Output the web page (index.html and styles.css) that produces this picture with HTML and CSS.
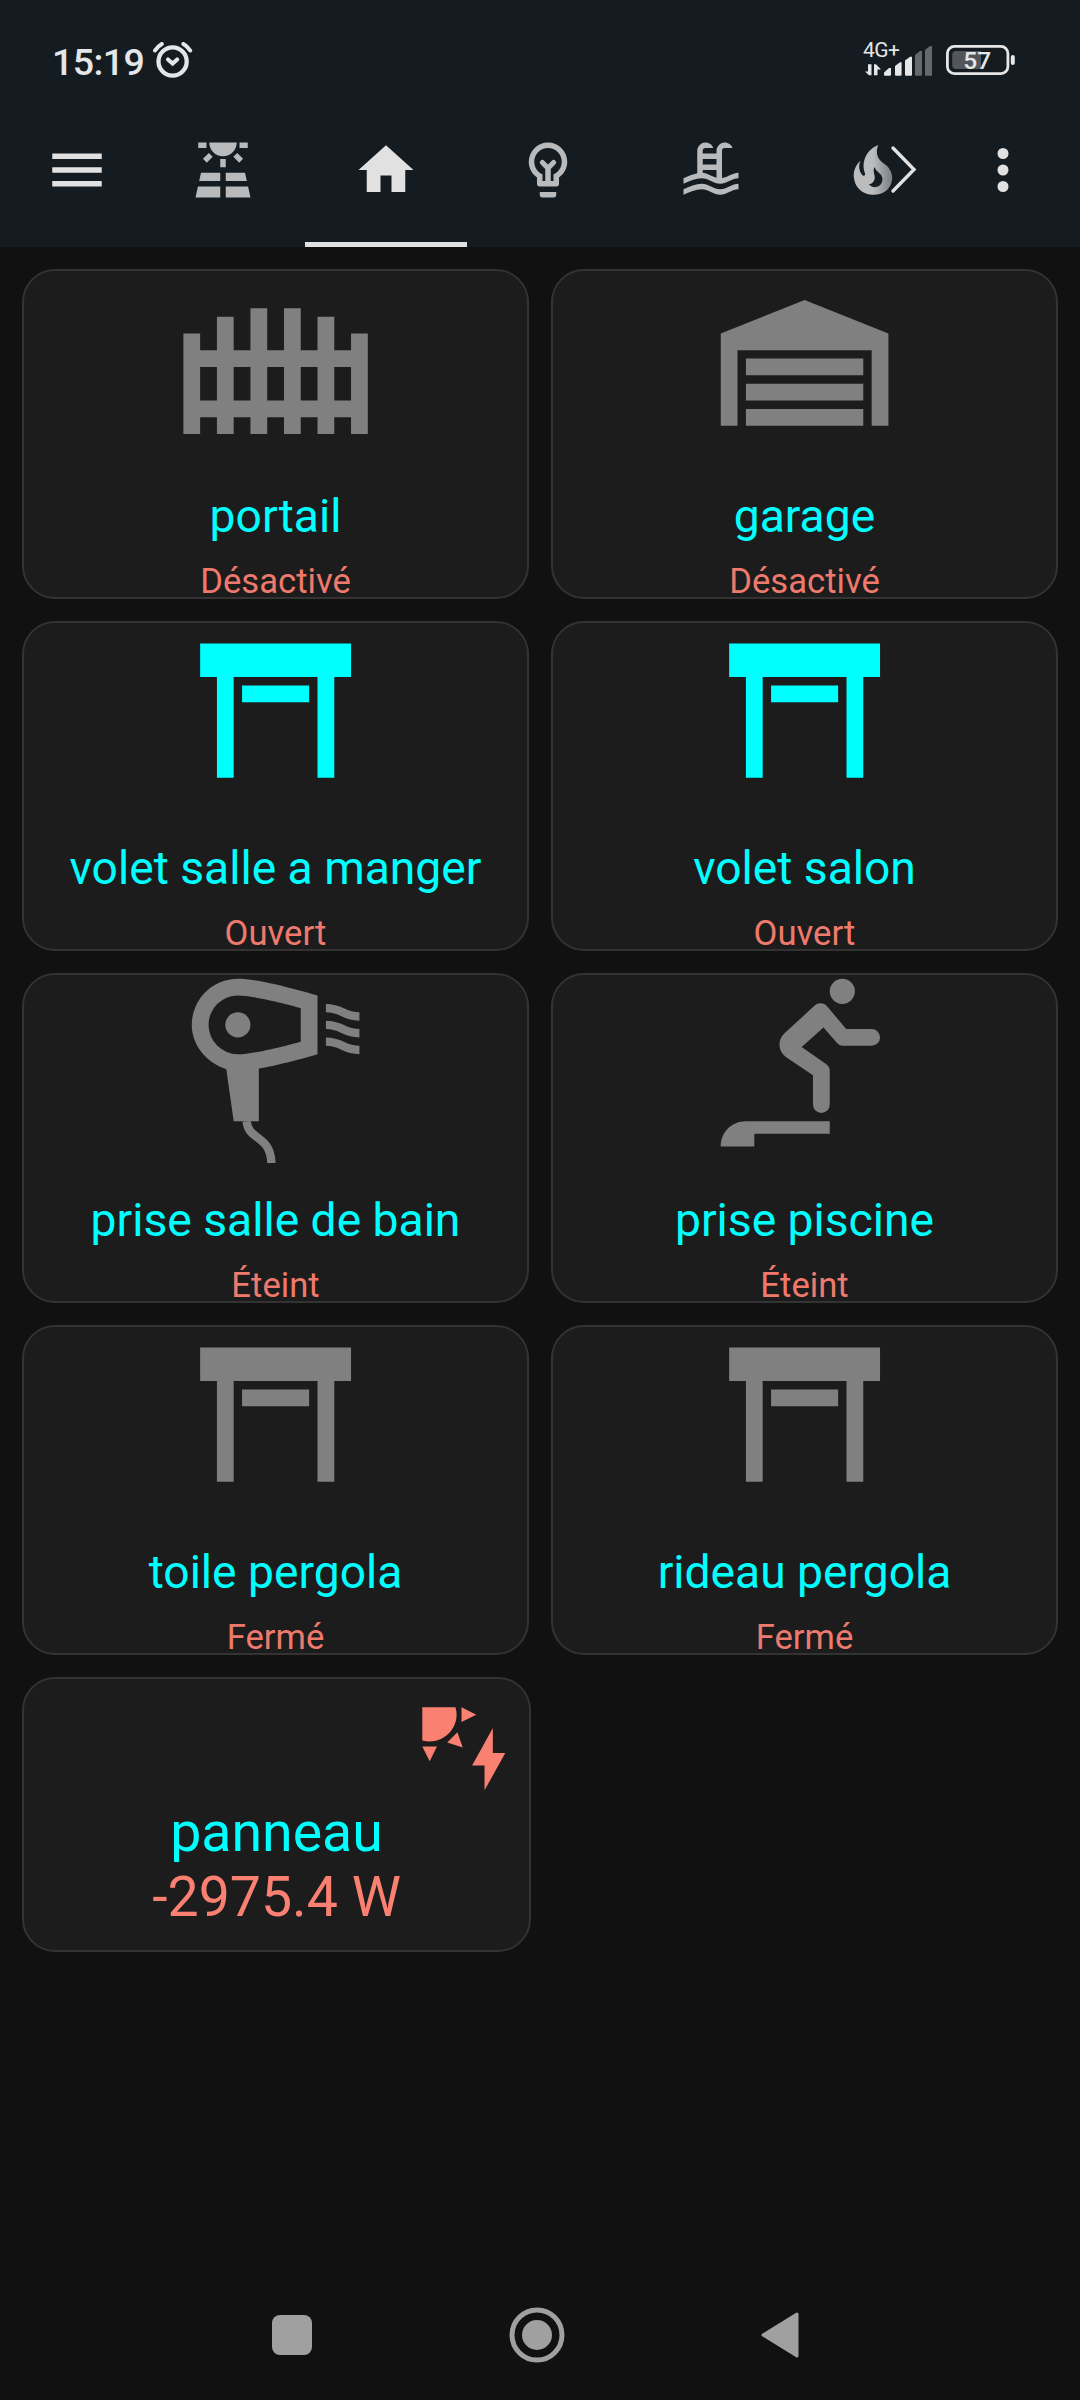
FILE: index.html
```
<!DOCTYPE html>
<html lang="fr">
<head>
<meta charset="utf-8">
<title>Maison</title>
<link rel="stylesheet" href="styles.css">
</head>
<body>
<svg width="0" height="0" class="defs" aria-hidden="true">
  <symbol id="shutter" viewBox="0 0 24 24"><path d="M3 4H21V8H19V20H17V8H7V20H5V8H3V4M8 9H16V11H8V9Z"/></symbol>
</svg>
<header class="top">
  <div class="status">
    <span class="clock">15:19</span>
    <svg class="alarm" viewBox="0 0 40 38"><g fill="none" stroke="#e4e6e8" stroke-linecap="round"><circle cx="19.600" cy="19.500" r="14.100" stroke-width="4.300"/><path d="M15 17.400L19.600 21.600L24.200 17.400" stroke-width="4"/><path d="M2 8.500Q4.500 4.500 8.800 2M37.200 8.500Q34.700 4.500 30.400 2" stroke-width="4"/></g></svg>
    <div class="network">
      <span class="generation">4G+</span>
      <svg class="signal" viewBox="0 0 68 36"><g fill="#e4e6e8"><path d="M1 25.500H4V18.300H7.500V29.300H5ZM10 29.300V18.300H12L17 23.500H13.500V29.300Z"/><path d="M20 28.800V26.500L25 22H27V28.800Q27 29.800 26 29.800H21Q20 29.800 20 28.800ZM31 28.800V20L36 16.300H37.600V28.800Q37.600 29.800 36.600 29.800H32Q31 29.800 31 28.800ZM41 28.800V14.500L46 10.700H48V28.800Q48 29.800 47 29.800H42Q41 29.800 41 28.800Z"/><path d="M51 28.800V9L56 5H58V28.800Q58 29.800 57 29.800H52Q51 29.800 51 28.800ZM61 28.800V4L66 0H68V28.800Q68 29.800 67 29.800H62Q61 29.800 61 28.800Z" fill="#65696e"/></g></svg>
    </div>
    <svg class="battery" viewBox="0 0 70 32"><rect x="1.400" y="1.400" width="60.500" height="27.200" rx="7" fill="none" stroke="#e4e6e8" stroke-width="2.800"/><path d="M10 6H35V24H10Q6.200 24 6.200 20V10Q6.200 6 10 6Z" fill="#52565c"/><rect x="64.800" y="10" width="4" height="10" rx="2" fill="#e4e6e8"/><text x="31.200" y="23.800" text-anchor="middle">57</text></svg>
  </div>
  <nav class="toolbar">
    <svg class="menu" viewBox="0 0 24 24"><path d="M3 6H21V8H3V6M3 11H21V13H3V11M3 16H21V18H3V16Z"/></svg>
    <div class="tabs">
      <div class="tab"><svg viewBox="0 0 24 24"><path d="M3.330 16H11V13H4L3.330 16M13 16H20.670L20 13H13V16M21.110 18H13V22H22L21.110 18M2 22H11V18H2.890L2 22M11 8H13V11H11V8M15.760 7.210L17.180 5.790L19.300 7.910L17.890 9.330L15.760 7.210M4.710 7.910L6.830 5.790L8.240 7.210L6.120 9.330L4.710 7.910M3 2H6V4H3V2M18 2H21V4H18V2M12 7C14.760 7 17 4.760 17 2H7C7 4.760 9.240 7 12 7Z"/></svg></div>
      <div class="tab active"><svg viewBox="0 0 24 24"><path d="M10 20V14H14V20H19V12H22L12 3L2 12H5V20H10Z"/></svg></div>
      <div class="tab"><svg viewBox="0 0 24 24"><path d="M12 2A7 7 0 0 1 19 9C19 11.380 17.810 13.470 16 14.740V17A1 1 0 0 1 15 18H9A1 1 0 0 1 8 17V14.740C6.190 13.470 5 11.380 5 9A7 7 0 0 1 12 2M9 21V20H15V21A1 1 0 0 1 14 22H10A1 1 0 0 1 9 21M12 4A5 5 0 0 0 7 9C7 11.050 8.230 12.810 10 13.580V16H11V11.600L9.300 9.900A.9.9 0 0 1 10.600 8.600L12 10L13.400 8.600A.9.9 0 0 1 14.700 9.900L13 11.600V16H14V13.580C15.770 12.810 17 11.050 17 9A5 5 0 0 0 12 4Z"/></svg></div>
      <div class="tab"><svg viewBox="0 0 24 24"><path d="M2,15C3.670,14.250 5.330,13.500 7,13.170V5A3,3 0 0,1 10,2C11.310,2 12.420,2.830 12.830,4H10A1,1 0 0,0 9,5V6H14V5A3,3 0 0,1 17,2C18.310,2 19.420,2.830 19.830,4H17A1,1 0 0,0 16,5V14.940C18,14.620 20,13 22,13V15C19.780,15 17.560,17 15.330,17C13.110,17 10.890,15 8.670,15C6.440,15 4.220,16 2,17V15M14,8H9V10H14V8M14,12H9V13C10.670,13.160 12.330,14.310 14,14.790V12M2,19C4.220,18 6.440,17 8.670,17C10.890,17 13.110,19 15.330,19C17.560,19 19.780,17 22,17V19C19.780,19 17.560,21 15.330,21C13.110,21 10.890,19 8.670,19C6.440,19 4.220,20 2,21V19Z"/></svg></div>
      <div class="tab"><svg viewBox="0 0 24 24"><defs><linearGradient id="fade" gradientUnits="userSpaceOnUse" x1="12" x2="19.500"><stop offset="0" stop-color="#bbbcbe"/><stop offset="1" stop-color="#757a7e"/></linearGradient></defs><path fill="url(#fade)" d="M17.660 11.200C17.430 10.900 17.150 10.640 16.890 10.380C16.220 9.780 15.460 9.350 14.820 8.720C13.330 7.260 13 4.850 13.950 3C13 3.230 12.170 3.750 11.460 4.320C8.870 6.400 7.850 10.070 9.070 13.220C9.110 13.320 9.150 13.420 9.150 13.550C9.150 13.770 9 13.970 8.800 14.050C8.570 14.150 8.330 14.090 8.140 13.930C8.080 13.880 8.040 13.830 8 13.760C6.870 12.330 6.690 10.280 7.450 8.640C5.780 10 4.870 12.300 5 14.470C5.060 14.970 5.120 15.470 5.290 15.970C5.430 16.570 5.700 17.170 6 17.700C7.080 19.430 8.950 20.670 10.960 20.920C13.100 21.190 15.390 20.800 17.030 19.320C18.860 17.660 19.500 15 18.560 12.720L18.430 12.460C18.220 12 17.660 11.200 17.660 11.200M14.500 17.500C14.220 17.740 13.760 18 13.400 18.100C12.280 18.500 11.160 17.940 10.500 17.280C11.690 17 12.400 16.120 12.610 15.230C12.780 14.430 12.460 13.770 12.330 13C12.210 12.260 12.230 11.630 12.500 10.940C12.690 11.320 12.890 11.700 13.130 12C13.900 13 15.110 13.440 15.370 14.800C15.410 14.940 15.430 15.080 15.430 15.230C15.460 16.050 15.100 16.950 14.500 17.500Z"/></svg></div>
      <svg class="more-tabs" viewBox="0 0 28 50"><path d="M3 3L24 24.500L3 46" fill="none" stroke="#e1e1e1" stroke-width="3.400" stroke-linecap="round"/></svg>
    </div>
    <svg class="overflow" viewBox="0 0 24 24"><path d="M12 16A2 2 0 1 1 12 20A2 2 0 1 1 12 16M12 10A2 2 0 1 1 12 14A2 2 0 1 1 12 10M12 4A2 2 0 1 1 12 8A2 2 0 1 1 12 4Z"/></svg>
  </nav>
</header>

<main class="cards">
  <div class="card"><svg class="icon" viewBox="0 0 24 24"><path d="M9 6V11H7V7H5V11H3V9H1V21H3V19H5V21H7V19H9V21H11V19H13V21H15V19H17V21H19V19H21V21H23V9H21V11H19V7H17V11H15V6H13V11H11V6H9M3 13H5V17H3V13M7 13H9V17H7V13M11 13H13V17H11V13M15 13H17V17H15V13M19 13H21V17H19V13Z"/></svg><div class="name">portail</div><div class="state">Désactivé</div></div>
  <div class="card"><svg class="icon" viewBox="0 0 24 24"><path d="M22 9V20H20V11H4V20H2V9L12 5L22 9M19 12H5V14H19V12M19 18H5V20H19V18M19 15H5V17H19V15Z"/></svg><div class="name">garage</div><div class="state">Désactivé</div></div>
  <div class="card"><svg class="icon on"><use href="#shutter"/></svg><div class="name">volet salle a manger</div><div class="state">Ouvert</div></div>
  <div class="card"><svg class="icon on"><use href="#shutter"/></svg><div class="name">volet salon</div><div class="state">Ouvert</div></div>
  <div class="card"><svg class="icon" viewBox="0 0 24 24"><path d="M17 4C17 4 10.500 2 7.500 2A5.500 5.500 0 0 0 2 7.500C2 9.900 3.700 12 6.120 12.800L7 19H10V12.700C13 12.200 17 11 17 11V4M15 9.500C15 9.500 9.700 11 7.500 11A3.500 3.500 0 0 1 4 7.500A3.500 3.500 0 0 1 7.500 4C9.700 4 15 5.500 15 5.500V9.500Z"/><circle cx="7.500" cy="7.500" r="1.500"/><path class="line" d="M8.550 19C8.700 21.300 11.400 20.600 11.500 24M18 5.500C20 5.500 20 6.500 22 6.500M18 7.500C20 7.500 20 8.500 22 8.500M18 9.500C20 9.500 20 10.500 22 10.500"/></svg><div class="name">prise salle de bain</div><div class="state">Éteint</div></div>
  <div class="card"><svg class="icon" viewBox="0 0 24 24"><circle cx="16.500" cy="3.500" r="1.500"/><path d="M13.200 5.200C13.600 4.800 14.300 4.800 14.700 5.300L16.960 8H20A1 1 0 0 1 20 10H16.600C16.300 10 16.100 9.900 15.900 9.700L14.250 7.800L11.650 10.150L14.600 12.200C14.900 12.400 15 12.700 15 13V17A1 1 0 0 1 13 17V13.500L9.800 11.350C8.800 10.600 8.750 9.300 9.600 8.500ZM2 22C2 20.300 3.300 19 5 19H15V20.500H6V22Z"/></svg><div class="name">prise piscine</div><div class="state">Éteint</div></div>
  <div class="card"><svg class="icon"><use href="#shutter"/></svg><div class="name">toile pergola</div><div class="state">Fermé</div></div>
  <div class="card"><svg class="icon"><use href="#shutter"/></svg><div class="name">rideau pergola</div><div class="state">Fermé</div></div>
  <div class="card panel"><svg class="solar" viewBox="0 0 24 24"><path d="M11.450,2V5.550L15,3.770L11.450,2M10.450,8L8,10.460L11.750,11.710L10.450,8M2,11.450L3.770,15L5.550,11.450H2M10,2H2V10C2.570,10.170 3.170,10.250 3.770,10.250C7.350,10.260 10.260,7.350 10.270,3.750C10.260,3.160 10.170,2.570 10,2M17,22V16H14L19,7V13H22L17,22Z"/></svg><div class="reading name">panneau</div><div class="reading value">-2975.4 W</div></div>
</main>

<footer class="system-nav">
  <svg width="40" height="40" viewBox="0 0 40 40"><rect width="40" height="40" rx="8"/></svg>
  <svg width="56" height="56" viewBox="0 0 56 56"><circle cx="28" cy="28" r="25" fill="none" stroke="#a0a0a0" stroke-width="5"/><circle cx="28" cy="28" r="15"/></svg>
  <svg width="38" height="46" viewBox="0 0 38 46"><path d="M2 23L36 2V44Z" stroke="#a0a0a0" stroke-width="3" stroke-linejoin="round"/></svg>
</footer>
</body>
</html>
```
FILE: styles.css
```
* { box-sizing: border-box; }
body {
  margin: 0;
  width: 1080px;
  height: 2400px;
  background: #111;
  font-family: Roboto, sans-serif;
  display: flex;
  flex-direction: column;
  overflow: hidden;
}
svg { display: block; flex: none; }
.defs { position: absolute; }

.top { height: 247px; background: #141c22; flex: none; }
.status {
  height: 93px;
  padding: 42px 64px 0 52px;
  display: flex;
  align-items: flex-start;
  color: #e4e6e8;
}
.clock { font-size: 37.500px; line-height: 40px; font-weight: 500; width: 101px; letter-spacing: -0.600px; }
.alarm { width: 40px; height: 38px; }
.network { margin-left: auto; width: 68px; display: flex; flex-direction: column; }
.generation { font-size: 21px; line-height: 20px; height: 20px; letter-spacing: -0.500px; margin: -2px 0 0 -1px; }
.signal { width: 68px; height: 36px; margin-top: -14px; }
.battery { width: 70px; height: 32px; margin: 3px 0 0 14px; }
.battery text { font: 500 24.500px Roboto, sans-serif; fill: #e4e6e8; }

.toolbar { height: 154px; display: flex; align-items: center; padding: 0 44px; fill: #e1e1e1; }
.toolbar svg { width: 66px; height: 66px; }
.tabs { position: relative; display: flex; width: 812px; margin-left: 32px; height: 100%; }
.tab {
  width: 162.500px;
  flex: none;
  display: flex;
  justify-content: center;
  align-items: center;
  fill: #b8babc;
  border-bottom: 5px solid transparent;
  border-top: 5px solid transparent;
}
.tab.active { fill: #e1e1e1; border-bottom-color: #e1e1e1; }
.toolbar .more-tabs { position: absolute; left: 748px; top: 52px; width: 28px; height: 50px; }
.toolbar .overflow { margin-left: 16px; }

.cards {
  padding: 22px 22px 0;
  display: grid;
  grid-template-columns: 507px 507px;
  grid-auto-rows: 330px;
  gap: 22px;
}
.card {
  border: 2px solid #333;
  border-radius: 33px;
  background: #1c1c1c;
  display: flex;
  flex-direction: column;
  align-items: center;
  white-space: nowrap;
}
.icon { width: 201.200px; height: 201.200px; margin-top: -13.200px; fill: #808080; }
.icon.on { fill: #0ff; }
.line { fill: none; stroke: #808080; stroke-width: 1; }
.name { color: #0ff; font-size: 46.200px; line-height: 54px; margin-top: 30px; }
.state { color: #fa8072; font-size: 34.650px; line-height: 40px; margin-top: 18px; opacity: .95; }

.card.panel { width: 509px; height: 275px; }
.solar { align-self: flex-end; width: 99.600px; height: 99.600px; margin: 20px 15px 0 0; fill: #fa8072; }
.reading { font-size: 55.440px; line-height: 65px; margin-top: 0; }
.reading.name { margin-top: 1px; }
.value { color: #fa8072; }

.system-nav {
  margin-top: auto;
  height: 130px;
  display: flex;
  align-items: center;
  padding-left: 272px;
  fill: #a0a0a0;
}
.system-nav svg:nth-child(2) { margin-left: 197px; }
.system-nav svg:nth-child(3) { margin-left: 196px; }
```
